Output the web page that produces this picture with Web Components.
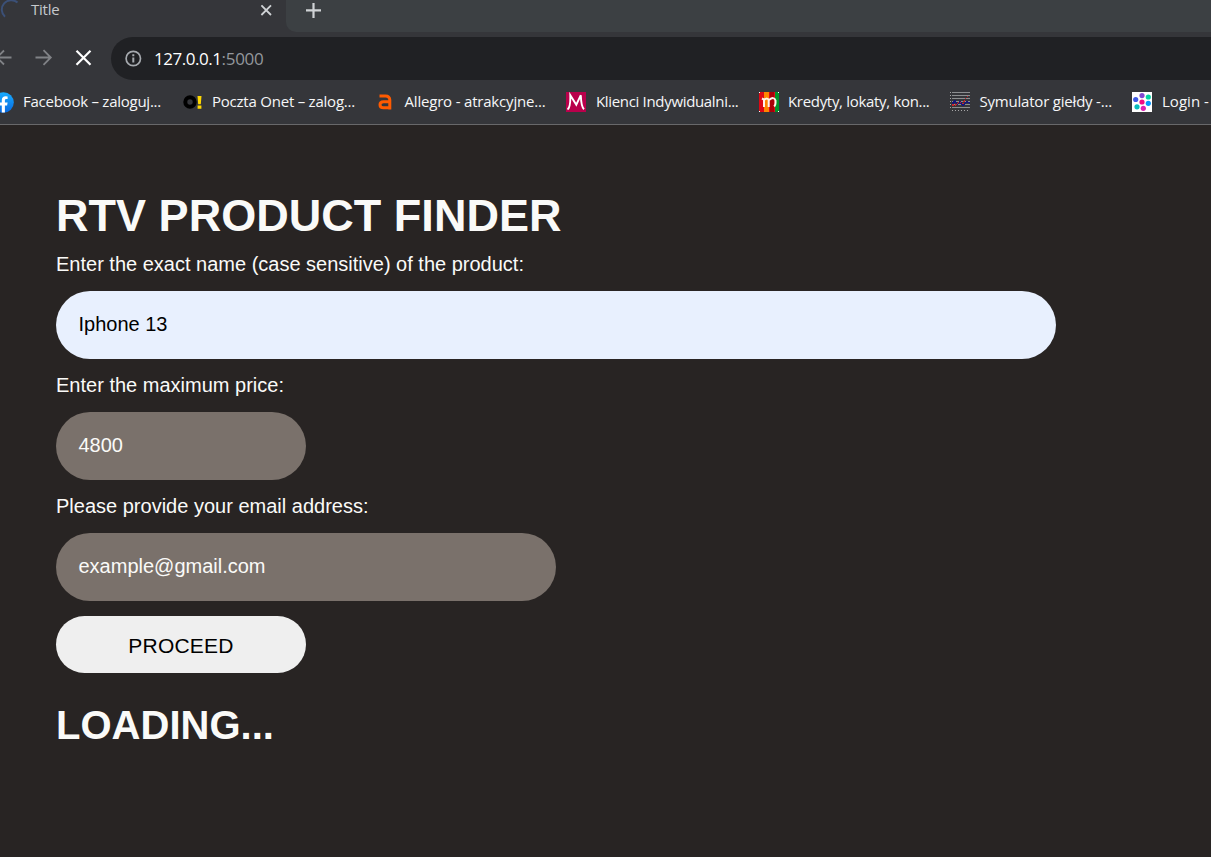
<!DOCTYPE html>
<html lang="en">
<head>
<meta charset="utf-8">
<title>Title</title>
<style>
html,body{margin:0;height:100%;overflow:hidden;background:#282423}
</style>
</head>
<body>
<app-window></app-window>
<script>
const define = (name, html, ready) => {
  const t = document.createElement('template');
  t.innerHTML = html;
  customElements.define(name, class extends HTMLElement {
    constructor() {
      super();
      this.attachShadow({mode: 'open'}).append(t.content.cloneNode(true));
    }
    connectedCallback() { if (ready) ready(this, this.shadowRoot); }
  });
};

// One line of text whose tracking is tuned so that it fills `width` pixels.
define('fit-text', `<style>:host{display:inline-block;white-space:pre;flex:none}span{display:inline-block}</style><span><slot></slot></span>`,
  (host, root) => {
    const span = root.querySelector('span');
    const want = +host.getAttribute('width');
    const have = span.getBoundingClientRect().width;
    const n = host.textContent.length;
    if (want && have) span.style.letterSpacing = ((want - have) / n).toFixed(3) + 'px';
  });

define('tab-strip', `<style>
:host{display:flex;height:32px;background:#35363a;color:#c6c9cd;font:15px/18px "Open Sans","Noto Sans",sans-serif}
.tab{width:286px;display:flex;box-sizing:border-box;position:relative}
.tab fit-text{margin:0 0 0 31px}
svg{display:block}
.spin{position:absolute;left:0;top:0}
.close{margin:4px 14px 0 auto}
.rest{flex:1;background:#3c4043;border-bottom-left-radius:10px;padding-left:20px}
</style>
<div class="tab"><svg class="spin" width="22" height="20" fill="none" stroke="#3b5077" stroke-width="2"><path d="M17.500 2.600A8.500 8.500 0 0 0 5 16.800"/></svg>
<fit-text width="28.500">Title</fit-text>
<svg class="close" width="12" height="12" stroke="#d0d3d6" stroke-width="1.800"><path d="M1.400 1.400l9.600 9.600M11 1.400L1.400 11"/></svg></div>
<div class="rest"><svg width="16" height="20" stroke="#d0d3d6" stroke-width="2.200"><path d="M0 10.300h15M7.500 3v15"/></svg></div>`);

define('tool-bar', `<style>
:host{display:flex;height:48px;background:#35363a;align-items:flex-start}
svg{display:block;flex:none}
.nav{width:111px;padding-top:16px;display:flex}
.pill{flex:1;height:43px;margin-top:5px;background:#202124;border-radius:22px 0 0 22px;display:flex;align-items:center;padding-left:14px;font:17px/24px "Open Sans","Noto Sans",sans-serif;color:#fff}
.pill svg{margin-right:12px}
.port{color:#93979c}
</style>
<div class="nav"><svg width="111" height="20" fill="none" stroke="#808286" stroke-width="1.800"><path d="M-4 9.500H11.500M4 2.500L-3 9.500l7 7M35.500 9.500h15M43.500 2.200l7.300 7.300-7.300 7.300"/><path stroke="#fff" stroke-width="2.200" d="M76.500 2.800l14 14M90.500 2.800l-14 14"/></svg></div>
<div class="pill"><svg width="17" height="17" fill="none" stroke="#a6aaaf" stroke-width="1.700"><circle cx="8.300" cy="8.500" r="7.200"/><path stroke-width="2" d="M8.300 7.500v5M8.300 4.200v2"/></svg><fit-text width="67.500">127.0.0.1</fit-text><fit-text class="port" width="42">:5000</fit-text></div>`);

define('book-mark', `<style>
:host{display:flex;flex:none;height:44px;align-items:center;margin-left:var(--gap)}
.icon{display:flex;flex:none;margin-right:var(--space,10px)}
.text{padding-bottom:2px}
</style><span class="icon"><slot name="icon"></slot></span><span class="text"><slot></slot></span>`);

define('bookmarks-bar', `<style>
:host{display:flex;height:44px;overflow:hidden;background:#35363a;border-bottom:1px solid #68686a;color:#f6f7f8;font:15px/20px "Open Sans","Noto Sans",sans-serif}
svg{display:block;flex:none}
</style>
<book-mark style="--gap:-7px;--space:9px"><svg slot="icon" width="21" height="21" viewBox="0 0 21 21"><defs><linearGradient id="f" x2="0" y2="1"><stop stop-color="#18acfe"/><stop offset="1" stop-color="#0768e0"/></linearGradient></defs><circle cx="10.500" cy="10.500" r="10.300" fill="url(#f)"/><path fill="#fff" d="M8.800 20.500v-7H6.500v-3h2.300V8.200c0-2.700 1.500-4 3.800-4l2 .2V7h-1.200c-1.200 0-1.500.6-1.500 1.500v2h2.700l-.5 3h-2.200v7z"/></svg><fit-text width="138">Facebook – zaloguj...</fit-text></book-mark>
<book-mark style="--gap:22px;--space:8px"><svg slot="icon" width="21" height="20" fill="none"><circle cx="7" cy="10" r="4.700" stroke="#000" stroke-width="4"/><path fill="#ffd800" d="M14.500 4h4l-.7 8.300h-2.600zM14.600 13.500h3.800v3.300h-3.800z"/></svg><fit-text width="143">Poczta Onet – zalog...</fit-text></book-mark>
<book-mark style="--gap:22px;--space:11.500px"><svg slot="icon" width="16" height="20" fill="none" stroke="#ff5a00" stroke-width="3"><path d="M2.500 4h6q4.300 0 4.300 4V17.500M12.500 9.800H6.500Q3 9.800 3 12.800t3.500 3h6"/></svg><fit-text width="141">Allegro - atrakcyjne...</fit-text></book-mark>
<book-mark style="--gap:20.500px"><svg slot="icon" width="20" height="20"><path fill="#b9004b" d="M0 0h20v20H0z"/><path fill="none" stroke="#fff" stroke-width="1.900" d="M1.500 17.500C4 16 4.500 10 4.300 3.200l6 9.500 4.500-9.500c.2 6 .5 11.500 3.200 14"/></svg><fit-text width="142.500">Klienci Indywidualni...</fit-text></book-mark>
<book-mark style="--gap:20.500px;--space:9px"><svg slot="icon" width="20" height="20"><path fill="#dc0814" d="M0 0h20v20H0z"/><path fill="#ff8500" d="M5 0h5v20H5z"/><path fill="#a90008" d="M11 0h4v20h-4z"/><path fill="#00932a" d="M16 0h4v20h-4z"/><path fill="none" stroke="#fff4ea" stroke-width="2" d="M3 6.500l2 1V15M5 8q4-3 4.700.5V15M10 8q5-4 6.500.5V11q0 2-1.300 3.500"/><path fill="#fff" d="M0 0h1v1H0zM19 0h1v1h-1zM0 19h1v1H0zM19 19h1v1h-1z"/></svg><fit-text width="141.500">Kredyty, lokaty, kon...</fit-text></book-mark>
<book-mark style="--gap:20.500px;--space:9.500px"><svg slot="icon" width="20" height="20" fill="none" shape-rendering="crispEdges"><path stroke="#8c8e90" d="M2 .5h18M2 3.500h18M2 6.500h18M2 9.500h18M2 12.500h18M2 15.500h18"/><path stroke="#a6a6a6" stroke-dasharray="1 2" d="M.5 0v17M2 18.500h18"/><path stroke="#15187b" stroke-width="1.500" d="M2 12l3-3 2 3 3-2 3 3 4-3 3 1"/><path stroke="#c9242a" stroke-width="1.300" stroke-dasharray="2 1" d="M2 13h4l3-3 4 2 2-5 4-4"/></svg><fit-text width="132.500">Symulator giełdy -...</fit-text></book-mark>
<book-mark style="--gap:20px"><svg slot="icon" width="20" height="20"><path fill="#fff" d="M0 0h20v20H0z"/><circle cx="10" cy="3.600" r="2.600" fill="#8148d0"/><circle cx="10" cy="10" r="2.600" fill="#f30b84"/><circle cx="16.300" cy="5" r="2.600" fill="#00d5a4"/><circle cx="3.700" cy="7.500" r="2.600" fill="#405be5"/><circle cx="16.300" cy="11.300" r="2.600" fill="#0796ff"/><circle cx="5" cy="14.800" r="2.600" fill="#08bdbf"/><circle cx="11.300" cy="16.300" r="2.600" fill="#df20b4"/></svg><fit-text width="47">Login -</fit-text></book-mark>`);

define('form-field', `<style>
:host{display:block;height:121px;font:20px/24px "Liberation Sans",Arial,sans-serif;color:#fafaf8}
label{display:block;height:39px}
.box{box-sizing:border-box;height:68px;width:var(--w);border-radius:34px;background:var(--bg,#7a716b);color:var(--ink,#fafaf8);padding:21px 22.500px 0}
</style><label><slot name="label"></slot></label><div class="box"><slot></slot></div>`);

define('proceed-button', `<style>
:host{display:block}
button{display:block;width:250px;height:57px;border:0;border-radius:29px;padding:3px 0 0;background:#efefef;color:#000;font:21px/24px "Liberation Sans",Arial,sans-serif}
</style><button><slot></slot></button>`);

define('product-finder', `<style>
:host{display:block;padding:65px 56px 0;font-family:"Liberation Sans",Arial,sans-serif;color:#fafaf8}
h1,h2{margin:0;font-weight:700;white-space:nowrap}
h1{font-size:45px;line-height:52px;height:62px}
h2{font-size:40px;line-height:46px;margin-top:29px}
proceed-button{margin-top:1px}
</style>
<h1><fit-text width="505.500">RTV PRODUCT FINDER</fit-text></h1>
<form-field style="--w:1000px;--bg:#e8f0fe;--ink:#000"><fit-text slot="label" width="468">Enter the exact name (case sensitive) of the product:</fit-text><fit-text width="89">Iphone 13</fit-text></form-field>
<form-field style="--w:250px"><fit-text slot="label" width="228">Enter the maximum price:</fit-text><fit-text width="44.500">4800</fit-text></form-field>
<form-field style="--w:500px"><fit-text slot="label" width="312.500">Please provide your email address:</fit-text><fit-text width="187">example@gmail.com</fit-text></form-field>
<proceed-button><fit-text width="105.500">PROCEED</fit-text></proceed-button>
<h2><fit-text width="218">LOADING...</fit-text></h2>`);

define('app-window', `<style>:host{display:flex;flex-direction:column;width:100%;height:857px;background:#282423}</style>
<tab-strip></tab-strip><tool-bar></tool-bar><bookmarks-bar></bookmarks-bar><product-finder></product-finder>`);
</script>
</body>
</html>
